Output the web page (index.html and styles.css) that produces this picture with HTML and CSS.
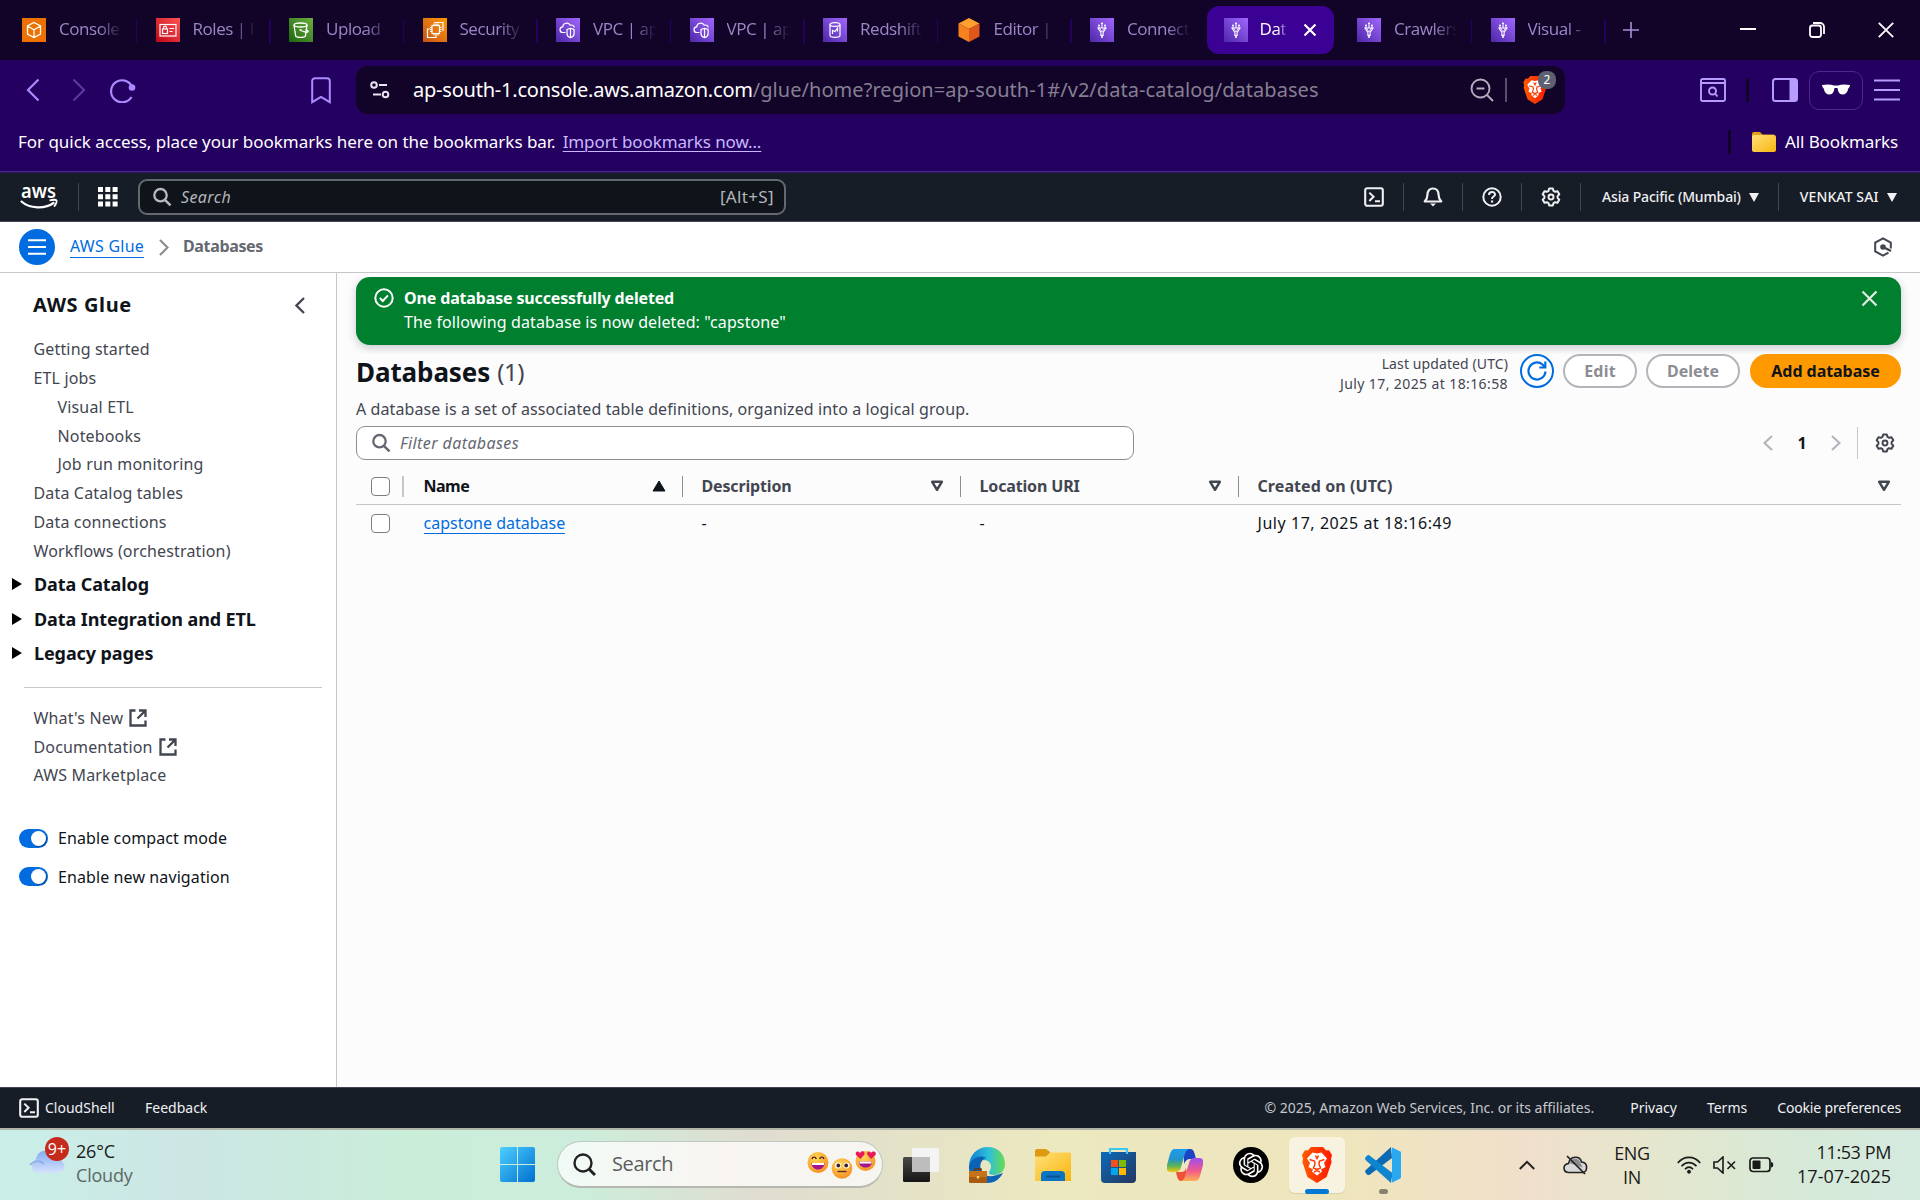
FILE: index.html
```html
<!DOCTYPE html>
<html lang="en">
<head>
<meta charset="utf-8">
<title>Databases - AWS Glue Console</title>
<link rel="stylesheet" href="styles.css">
</head>
<body>
<svg class="defs" width="0" height="0">
  <defs>
    <linearGradient id="gPurple" x1="0" y1="1" x2="1" y2="0"><stop offset="0" stop-color="#4d27a8"/><stop offset="1" stop-color="#a166ff"/></linearGradient>
    <linearGradient id="gRed" x1="0" y1="1" x2="1" y2="0"><stop offset="0" stop-color="#bd0816"/><stop offset="1" stop-color="#ff5252"/></linearGradient>
    <linearGradient id="gGreen" x1="0" y1="1" x2="1" y2="0"><stop offset="0" stop-color="#1b660f"/><stop offset="1" stop-color="#6cae3e"/></linearGradient>
    <linearGradient id="gOrange" x1="0" y1="1" x2="1" y2="0"><stop offset="0" stop-color="#c8511b"/><stop offset="1" stop-color="#ff9900"/></linearGradient>
    <linearGradient id="gWin" x1="0" y1="0" x2="1" y2="1"><stop offset="0" stop-color="#4cd0ff"/><stop offset="1" stop-color="#0070d0"/></linearGradient>
    <linearGradient id="gCloud" x1="0" y1="0" x2="0" y2="1"><stop offset="0" stop-color="#86aaf0"/><stop offset="1" stop-color="#d4e2fc"/></linearGradient>
    <linearGradient id="gEdge" x1="0" y1="0" x2="1" y2="0"><stop offset="0" stop-color="#0c80d4"/><stop offset=".55" stop-color="#2dc0d8"/><stop offset="1" stop-color="#68dc50"/></linearGradient>
    <linearGradient id="gFolder" x1="0" y1="0" x2="1" y2="1"><stop offset="0" stop-color="#ffe07a"/><stop offset="1" stop-color="#f9b50e"/></linearGradient>
    <linearGradient id="gStore" x1="0" y1="0" x2="1" y2="1"><stop offset="0" stop-color="#0a6cbc"/><stop offset="1" stop-color="#26365e"/></linearGradient>
    <linearGradient id="gCopA" x1="0" y1="0" x2="0" y2="1"><stop offset="0" stop-color="#1c9df0"/><stop offset=".45" stop-color="#2494c8"/><stop offset=".75" stop-color="#62b552"/><stop offset="1" stop-color="#f6c913"/></linearGradient>
    <linearGradient id="gCopB" x1="0" y1="0" x2="0" y2="1"><stop offset="0" stop-color="#9c4ff0"/><stop offset=".55" stop-color="#f0598a"/><stop offset="1" stop-color="#ffb052"/></linearGradient>
    <linearGradient id="gBrave" x1="0" y1="0" x2="1" y2="0"><stop offset="0" stop-color="#ff5a00"/><stop offset="1" stop-color="#ff1a00"/></linearGradient>
    <linearGradient id="gDark" x1="0" y1="0" x2="0" y2="1"><stop offset="0" stop-color="#4a4a4a"/><stop offset="1" stop-color="#151515"/></linearGradient>
    <radialGradient id="gFace" cx=".4" cy=".3" r=".8"><stop offset="0" stop-color="#ffd755"/><stop offset="1" stop-color="#f58a1f"/></radialGradient>
  </defs>
  <symbol id="glue" viewBox="0 0 24 24"><rect width="24" height="24" fill="url(#gPurple)"/><g fill="none" stroke="#fff" stroke-width="1.100"><path d="M8 10h8l-2.900 4.400v3h-2.200v-3zM9 8.600V10M12 6.500V10M15 8.600V10M12 17.400v1.200"/><path d="M9.500 10l2.500 4 2.500-4" stroke-width=".8"/></g><g fill="#fff"><circle cx="9" cy="7.600" r="1"/><circle cx="12" cy="5.500" r="1.100"/><circle cx="15" cy="7.600" r="1"/><circle cx="12" cy="19" r="1"/></g></symbol>
  <symbol id="vpc" viewBox="0 0 24 24"><rect width="24" height="24" fill="url(#gPurple)"/><g fill="none" stroke="#fff" stroke-width="1.200"><path d="M9.500 14.500H7a2.800 2.800 0 0 1-.300-5.600C6.800 5 12.500 3.600 14.300 7.300c2-.9 4 .4 4 2.300"/><path d="M14.500 10.300l3.600 1.200v4.200c0 2-2 3.400-3.600 4-1.600-.6-3.500-2-3.500-4v-4.200zM14.500 10.300v9.300"/></g></symbol>
  <symbol id="shell" viewBox="0 0 20 20"><rect x="1.200" y="1.200" width="17.600" height="17.600" rx="2" fill="none" stroke="currentColor" stroke-width="2.100"/><path d="M5.300 5.600l4.300 4.200-4.300 4.200M11 14.300h5" fill="none" stroke="currentColor" stroke-width="2"/></symbol>
  <symbol id="gear" viewBox="0 0 20 20"><path d="M8.200 1.500h3.600l.7 2.400 1.600.9 2.400-.6 1.800 3.100-1.700 1.800v1.800l1.700 1.800-1.800 3.100-2.400-.6-1.600.9-.7 2.400H8.200l-.7-2.400-1.600-.9-2.400.6-1.800-3.100 1.700-1.800V9.100L1.700 7.300l1.800-3.100 2.400.6 1.600-.9z" fill="none" stroke="currentColor" stroke-width="2" stroke-linejoin="round"/><circle cx="10" cy="10" r="2.500" fill="none" stroke="currentColor" stroke-width="1.900"/></symbol>
  <symbol id="mag" viewBox="0 0 20 20"><circle cx="8.500" cy="8.200" r="6.200" fill="none" stroke="currentColor" stroke-width="2.300"/><path d="M12.900 12.800l5.600 5.600" stroke="currentColor" stroke-width="2.500"/></symbol>
  <symbol id="ext" viewBox="0 0 18 18"><path d="M6.500 1.500H1.500v15h15v-5M10 1.500h6.500V8M16 2L8.500 9.500" fill="none" stroke="currentColor" stroke-width="2.300"/></symbol>
  <symbol id="tridown" viewBox="0 0 14 12"><path d="M2.200 1.800h9.600L7 9.800z" fill="none" stroke="currentColor" stroke-width="2.500" stroke-linejoin="round"/></symbol>
  <symbol id="lion" viewBox="0 0 30 36"><path d="M9 0h12l3.200 3.600 2.800-.4L30 8l-1 4 .6 3-5 15L15 36 5.400 30 .4 15 1 12 0 8l3-4.800 2.800.4z" fill="url(#gBrave)"/><path d="M10.500 5.500l4.500 1 4.500-1 5.500 6-3 4.500 1.500 4-4.500 2.500 1 2-5 4-5-4 1-2-4.500-2.500 1.500-4-3-4.500z" fill="#fff"/><path d="M7.500 12.500l5 1.500.5 3-1.500 4 3.500 1.500 3.500-1.500-1.500-4 .5-3 5-1.500M12 25l3-1.500 3 1.500M13.500 8.500l1.500 3 1.500-3" fill="none" stroke="#ff3a00" stroke-width="1.500"/></symbol>
</svg>

<header class="tabstrip">
  <div class="tab"><svg class="fav" viewBox="0 0 24 24"><rect width="24" height="24" fill="#ed7100"/><path d="M12 4.500l6.500 3.500v8L12 19.500 5.500 16V8zM5.500 8l6.500 3.700L18.500 8M12 11.700v7.800" fill="none" stroke="#fff" stroke-width="1.300"/></svg><span class="tt">Console</span></div>
  <div class="tab"><svg class="fav" viewBox="0 0 24 24"><rect width="24" height="24" fill="url(#gRed)"/><g fill="none" stroke="#fff" stroke-width="1.200"><rect x="4" y="6.500" width="16" height="11.500"/><rect x="6.500" y="11" width="5" height="4.500"/><path d="M7.500 11V9.700a1.500 1.500 0 0 1 3 0V11M13.500 10.500h4.500M13.500 13.500h3"/></g></svg><span class="tt">Roles | I</span></div>
  <div class="tab"><svg class="fav" viewBox="0 0 24 24"><rect width="24" height="24" fill="url(#gGreen)"/><g fill="none" stroke="#fff" stroke-width="1.300"><ellipse cx="11.500" cy="7" rx="6.500" ry="2"/><path d="M5 7l1.700 11c.5 1.800 9.200 1.800 9.700 0L18 7M12 12.500c3 1.500 7 2.500 7.200 1 .1-.8-1.500-1.600-2.600-2.200"/></g><circle cx="11.500" cy="12" r="1.100" fill="#fff"/></svg><span class="tt">Upload</span></div>
  <div class="tab"><svg class="fav" viewBox="0 0 24 24"><rect width="24" height="24" fill="url(#gOrange)"/><g fill="none" stroke="#fff" stroke-width="1.200"><rect x="9" y="7.500" width="7.500" height="8"/><path d="M11 5.500v2M13 5.500v2M15 5.500v2M11 15.500v2M13 15.500v2M15 15.500v2M7 9.500h2M7 11.500h2M7 13.500h2M16.500 9.500h2M16.500 11.500h2M16.500 13.500h2M11 4.500h9V13M7 11H4.500v8.500h8.500v-2"/></g></svg><span class="tt">Security</span></div>
  <div class="tab"><svg class="fav"><use href="#vpc"/></svg><span class="tt">VPC | ap</span></div>
  <div class="tab"><svg class="fav"><use href="#vpc"/></svg><span class="tt">VPC | ap</span></div>
  <div class="tab"><svg class="fav" viewBox="0 0 24 24"><rect width="24" height="24" fill="url(#gPurple)"/><g fill="none" stroke="#fff" stroke-width="1.200"><ellipse cx="12" cy="6.500" rx="5" ry="1.900"/><path d="M7 6.500v11c0 2.400 10 2.400 10 0v-11M9.500 16v-3.500l2.500 1 2.500-3.500v3.500"/></g></svg><span class="tt">Redshift</span></div>
  <div class="tab"><svg class="fav" viewBox="0 0 24 24"><path d="M12 0l10.500 5.500L12 11 1.500 5.500z" fill="#ffa02e"/><path d="M1.500 5.500L12 11v13L1.500 18.500z" fill="#f6821f"/><path d="M22.500 5.500L12 11v13l10.500-5.500z" fill="#e0571d"/></svg><span class="tt">Editor |</span></div>
  <div class="tab nosep"><svg class="fav"><use href="#glue"/></svg><span class="tt">Connect</span></div>
  <div class="tab active"><svg class="fav"><use href="#glue"/></svg><span class="tt">Dat</span><svg class="tabx" viewBox="0 0 14 14"><path d="M1.500 1.500l11 11M12.500 1.500l-11 11" stroke="#fff" stroke-width="2.200"/></svg></div>
  <div class="tab"><svg class="fav"><use href="#glue"/></svg><span class="tt">Crawlers</span></div>
  <div class="tab"><svg class="fav"><use href="#glue"/></svg><span class="tt">Visual -</span></div>
  <svg class="plus" viewBox="0 0 18 18"><path d="M9 1v16M1 9h16" stroke="#a98fd8" stroke-width="1.600"/></svg>
  <div class="winctl">
    <svg width="16" height="16" viewBox="0 0 16 16"><path d="M0 7h16" stroke="#fff" stroke-width="2"/></svg>
    <svg width="16" height="16" viewBox="0 0 16 16" fill="none" stroke="#fff" stroke-width="1.800"><rect x="1" y="3.500" width="11" height="11.500" rx="2.500"/><path d="M4 1h7a4 4 0 0 1 4 4v7"/></svg>
    <svg width="16" height="16" viewBox="0 0 16 16"><path d="M.8.800l14.400 14.400M15.200.8L.8 15.200" stroke="#fff" stroke-width="1.800"/></svg>
  </div>
</header>

<section class="toolbar">
  <div class="navbtns">
    <svg width="14" height="24" viewBox="0 0 14 24"><path d="M12.500 1.500L2 12l10.500 10.500" fill="none" stroke="#a98bff" stroke-width="2.200"/></svg>
    <svg width="14" height="24" viewBox="0 0 14 24"><path d="M1.500 1.500L12 12 1.500 22.500" fill="none" stroke="#5a37a0" stroke-width="2.200"/></svg>
    <svg width="26" height="26" viewBox="0 0 26 26"><path d="M22 9.500A11 11 0 1 0 21.500 20" fill="none" stroke="#a98bff" stroke-width="2.200"/><circle cx="22" cy="10.500" r="3.300" fill="#a98bff"/></svg>
  </div>
  <svg class="bm" width="20" height="27" viewBox="0 0 20 27"><path d="M1.200 4a2.800 2.800 0 0 1 2.800-2.800h12A2.800 2.800 0 0 1 18.800 4v21.200L10 19.800 1.200 25.200z" fill="none" stroke="#a98bff" stroke-width="2"/></svg>
  <div class="urlbar">
    <svg width="20" height="18" viewBox="0 0 20 18" fill="none" stroke="#e8e4f0" stroke-width="2"><circle cx="4" cy="4" r="2.800"/><path d="M9 4h8M3 13.500h8"/><circle cx="15.500" cy="13.500" r="2.800"/></svg>
    <div class="url"><span class="host">ap-south-1.console.aws.amazon.com</span><span class="path">/glue/home?region=ap-south-1#/v2/data-catalog/databases</span></div>
    <svg class="zoomi" width="24" height="24" viewBox="0 0 24 24" fill="none" stroke="#b3aebf" stroke-width="1.900"><circle cx="10.500" cy="10.500" r="9"/><path d="M17 17l6 6M6.500 10.500h8"/></svg>
    <i class="usep"></i>
    <div class="shield"><svg width="24" height="28"><use href="#lion"/></svg><b class="badge">2</b></div>
  </div>
  <div class="rtools">
    <svg width="26" height="24" viewBox="0 0 26 24" fill="none" stroke="#b79cff" stroke-width="1.900"><rect x="1" y="1" width="24" height="22" rx="1.500"/><path d="M1 5h24" stroke-width="2"/><circle cx="12.500" cy="13" r="3.500"/><path d="M15 15.500l2.500 3"/></svg>
    <i class="rsep"></i>
    <svg width="26" height="24" viewBox="0 0 26 24"><rect x="1" y="1" width="24" height="22" rx="2.500" fill="none" stroke="#b79cff" stroke-width="2"/><path d="M17.500 1h7.500v22h-7.500z" fill="#b79cff"/></svg>
    <div class="vpn"><svg width="28" height="12" viewBox="0 0 28 12"><path d="M0 1c5-1 9-.7 12 .5h4c3-1.200 7-1.500 12-.5l-.5 2-1.200 1.500c-.8 4-2.800 6-5.800 6-3.500 0-4.500-3-5-6.500h-3c-.5 3.500-1.500 6.500-5 6.500-3 0-5-2-5.800-6L.5 3z" fill="#fff"/></svg></div>
    <svg width="26" height="22" viewBox="0 0 26 22"><path d="M0 1.500h26M0 11h26M0 20.500h26" stroke="#b79cff" stroke-width="2"/></svg>
  </div>
</section>
<section class="bookmarks">
  <span class="bmtext">For quick access, place your bookmarks here on the bookmarks bar.</span>
  <span class="bmlink">Import bookmarks now...</span>
  <i class="bmsep"></i>
  <svg width="24" height="20" viewBox="0 0 24 20"><path d="M0 2a2 2 0 0 1 2-2h6l2.500 2.500H22v4H0z" fill="#e0a21b"/><rect y="3" width="24" height="17" rx="2" fill="url(#gFolder)"/></svg>
  <span class="allbm">All Bookmarks</span>
</section>

<nav class="awsnav">
  <svg class="awslogo" width="38" height="24" viewBox="0 0 38 24"><text x="1" y="12.500" class="awst" textLength="35" lengthAdjust="spacingAndGlyphs">aws</text><path d="M.8 16c9 8 24 8.500 33.500 1.500" fill="none" stroke="#fff" stroke-width="2.200"/><path d="M29.500 15.500c3-1 6.500-1 7 0s-.5 4-2.500 6" fill="none" stroke="#fff" stroke-width="1.800"/></svg>
  <i class="nsep"></i>
  <svg class="grid9" width="20" height="20" viewBox="0 0 20 20" fill="#fff"><path d="M0 0h5v5H0zM7.300 0h5v5h-5zM14.600 0h5v5h-5zM0 7.300h5v5H0zM7.300 7.300h5v5h-5zM14.600 7.300h5v5h-5zM0 14.600h5v5H0zM7.300 14.600h5v5h-5zM14.600 14.600h5v5h-5z"/></svg>
  <div class="nsearch"><svg width="20" height="20"><use href="#mag"/></svg><em>Search</em><span class="alt">[Alt+S]</span></div>
  <div class="nright">
    <svg width="20" height="20"><use href="#shell"/></svg><i class="nsep"></i>
    <svg width="20" height="20" viewBox="0 0 20 20"><path d="M10 1.500c-3.600 0-5.500 2.700-5.500 6 0 3.500-1 5-2.800 7h16.600c-1.800-2-2.800-3.500-2.800-7 0-3.300-1.900-6-5.500-6z" fill="none" stroke="currentColor" stroke-width="2.200" stroke-linejoin="round"/><path d="M7 16.500h6l-3 3z" fill="currentColor"/></svg><i class="nsep"></i>
    <svg width="20" height="20" viewBox="0 0 20 20"><circle cx="10" cy="10" r="8.700" fill="none" stroke="currentColor" stroke-width="2"/><path d="M7 8c0-4 6-4 6-.6 0 2.300-3 2-3 4.600" fill="none" stroke="currentColor" stroke-width="2"/><path d="M9 13.500h2.200v2H9z" fill="currentColor"/></svg><i class="nsep"></i>
    <svg width="20" height="20"><use href="#gear"/></svg><i class="nsep"></i>
    <span class="region">Asia Pacific (Mumbai)</span><svg width="10" height="9" viewBox="0 0 10 9"><path d="M0 0h10L5 9z" fill="currentColor"/></svg><i class="nsep"></i>
    <span class="user">VENKAT SAI</span><svg width="10" height="9" viewBox="0 0 10 9"><path d="M0 0h10L5 9z" fill="currentColor"/></svg>
  </div>
</nav>

<div class="crumbs">
  <div class="burger"><svg width="18" height="16" viewBox="0 0 18 16"><path d="M0 1.200h18M0 8h18M0 14.800h18" stroke="#fff" stroke-width="2"/></svg></div>
  <a class="crumb">AWS Glue</a>
  <svg width="10" height="17" viewBox="0 0 10 17"><path d="M1 1l7.500 7.500L1 16" fill="none" stroke="#8c8c94" stroke-width="2.200"/></svg>
  <b class="here">Databases</b>
  <svg class="hexi" width="18" height="20" viewBox="0 0 18 20"><path d="M16.800 11.500V5.700L9 1.300 1.200 5.700v8.600L9 18.700l5.500-3.100" fill="none" stroke="#424650" stroke-width="2"/><circle cx="9" cy="10" r="2.800" fill="#424650"/><path d="M9 10l8 4" stroke="#424650" stroke-width="2.400"/></svg>
</div>

<main class="body">
  <aside class="side">
    <div class="sidehead"><h2>AWS Glue</h2><svg width="10" height="17" viewBox="0 0 10 17"><path d="M9 1L1.500 8.500 9 16" fill="none" stroke="#424650" stroke-width="2.300"/></svg></div>
    <ul class="links">
      <li><span>Getting started</span></li><li><span>ETL jobs</span></li>
      <li class="sub"><span>Visual ETL</span></li><li class="sub"><span>Notebooks</span></li><li class="sub"><span>Job run monitoring</span></li>
      <li><span>Data Catalog tables</span></li><li><span>Data connections</span></li><li><span>Workflows (orchestration)</span></li>
    </ul>
    <ul class="groups">
      <li><svg width="10" height="12" viewBox="0 0 10 12"><path d="M0 0l10 6-10 6z"/></svg><b>Data Catalog</b></li>
      <li><svg width="10" height="12" viewBox="0 0 10 12"><path d="M0 0l10 6-10 6z"/></svg><b>Data Integration and ETL</b></li>
      <li><svg width="10" height="12" viewBox="0 0 10 12"><path d="M0 0l10 6-10 6z"/></svg><b>Legacy pages</b></li>
    </ul>
    <ul class="links extra">
      <li><span>What's New</span><svg width="18" height="18"><use href="#ext"/></svg></li>
      <li><span>Documentation</span><svg width="18" height="18"><use href="#ext"/></svg></li>
      <li><span>AWS Marketplace</span></li>
    </ul>
    <div class="toggles">
      <div><i class="switch"></i><span>Enable compact mode</span></div>
      <div><i class="switch"></i><span>Enable new navigation</span></div>
    </div>
  </aside>

  <section class="content">
    <div class="flashwrap"><div class="flash">
      <svg width="20" height="20" viewBox="0 0 20 20" fill="none" stroke="#fff" stroke-width="2"><circle cx="10" cy="10" r="8.700"/><path d="M5.800 10l3 3L14 7.300"/></svg>
      <div class="ftext"><b>One database successfully deleted</b><span>The following database is now deleted: "capstone"</span></div>
      <svg width="17" height="17" viewBox="0 0 17 17"><path d="M1.500 1.500l14 14M15.500 1.500l-14 14" stroke="#e4eee6" stroke-width="2.200"/></svg>
    </div></div>
    <div class="headrow">
      <h1>Databases</h1><span class="count">(1)</span>
      <div class="updated"><span>Last updated (UTC)</span><span class="stamp">July 17, 2025 at 18:16:58</span></div>
      <div class="btn round"><svg width="20" height="20" viewBox="0 0 20 20" fill="none" stroke="#006ce0" stroke-width="2.200"><path d="M18.500 10.500A8.500 8.500 0 1 1 15.500 3.500l2.500 2.700"/><path d="M18.300.500v6h-6"/></svg></div>
      <div class="btn edit"><b>Edit</b></div><div class="btn del"><b>Delete</b></div><div class="btn primary"><b>Add database</b></div>
    </div>
    <p class="desc">A database is a set of associated table definitions, organized into a logical group.</p>
    <div class="filterrow">
      <div class="filter"><svg width="20" height="20"><use href="#mag"/></svg><em>Filter databases</em></div>
      <div class="pager">
        <svg width="10" height="16" viewBox="0 0 10 16"><path d="M9 1L1.500 8 9 15" fill="none" stroke="#b4b4bb" stroke-width="2.200"/></svg>
        <b>1</b>
        <svg width="10" height="16" viewBox="0 0 10 16"><path d="M1 1l7.500 7L1 15" fill="none" stroke="#b4b4bb" stroke-width="2.200"/></svg>
        <i></i>
        <svg class="pg" width="20" height="20"><use href="#gear"/></svg>
      </div>
    </div>
    <div class="grid head">
      <div class="c0"><i class="cb"></i></div>
      <div class="cell on"><b>Name</b><svg width="14" height="12" viewBox="0 0 14 12"><path d="M7 1l6 10H1z" fill="currentColor" stroke="currentColor"/></svg></div>
      <div class="cell"><b>Description</b><svg width="14" height="12"><use href="#tridown"/></svg></div>
      <div class="cell"><b>Location URI</b><svg width="14" height="12"><use href="#tridown"/></svg></div>
      <div class="cell wide"><b>Created on (UTC)</b><svg width="14" height="12"><use href="#tridown"/></svg></div>
    </div>
    <div class="grid row">
      <div class="c0"><i class="cb"></i></div>
      <div class="cell"><a>capstone database</a></div>
      <div class="cell"><span>-</span></div>
      <div class="cell"><span>-</span></div>
      <div class="cell"><span class="date">July 17, 2025 at 18:16:49</span></div>
    </div>
  </section>
</main>

<footer class="foot">
  <svg width="20" height="20"><use href="#shell"/></svg>
  <span class="f1">CloudShell</span><span class="f2">Feedback</span>
  <span class="copy">© 2025, Amazon Web Services, Inc. or its affiliates.</span>
  <span class="f3">Privacy</span><span class="f4">Terms</span><span class="f5">Cookie preferences</span>
</footer>

<div class="taskbar">
  <div class="weather">
    <div class="wicon"><svg width="38" height="24" viewBox="0 0 38 24"><path d="M8 23a7.500 7.500 0 0 1-.5-13C9 3 14 0 19 1c5 .500 8 4 9 8.500 11 0 11 13 1 13.500z" fill="url(#gCloud)"/><path d="M2 15c4-5 10-5 14-1" fill="none" stroke="#88a8ea" stroke-width="1.500"/></svg><b>9+</b></div>
    <div class="wtext"><span>26°C</span><span class="dim">Cloudy</span></div>
  </div>
  <svg class="win" width="35" height="35" viewBox="0 0 35 35" fill="url(#gWin)"><path d="M2 0h15v17H0V2a2 2 0 0 1 2-2zM18 0h15a2 2 0 0 1 2 2v15H18zM0 18h17v17H2a2 2 0 0 1-2-2zM18 18h17v15a2 2 0 0 1-2 2H18z"/></svg>
  <div class="tsearch"><svg width="23" height="23" viewBox="0 0 23 23"><circle cx="10" cy="10" r="8.500" fill="none" stroke="#222" stroke-width="2.400"/><path d="M16 16l6 6" stroke="#222" stroke-width="3"/></svg><span>Search</span>
    <svg class="emo" width="70" height="30" viewBox="0 0 70 30">
      <g><circle cx="11" cy="13.500" r="10.500" fill="url(#gFace)"/><path d="M4.500 14h13c0 4-3 6.500-6.500 6.500S4.500 18 4.500 14z" fill="#a3158f"/><path d="M5 14h12v2H5z" fill="#fff"/><path d="M5 10c.8-2.500 3.500-2.500 4.300 0M12.700 10c.8-2.500 3.500-2.500 4.300 0" fill="none" stroke="#4e1f2a" stroke-width="1.400"/></g>
      <g><circle cx="35" cy="19.500" r="10.300" fill="url(#gFace)"/><circle cx="31" cy="16.500" r="3" fill="#fff"/><circle cx="39.500" cy="16.500" r="3" fill="#fff"/><circle cx="31.300" cy="16.500" r="1.900" fill="#3d2227"/><circle cx="39.200" cy="16.500" r="1.900" fill="#3d2227"/><path d="M30.500 22.500h9" stroke="#5b2b33" stroke-width="1.400"/></g>
      <g><circle cx="58.500" cy="12" r="10" fill="url(#gFace)"/><path d="M52 12.500h13c0 4-3 6-6.500 6s-6.500-2-6.500-6z" fill="#a3158f"/><path d="M52.500 12.500h12v2h-12z" fill="#fff"/><path d="M53.500 10l-4.500-4c-1.500-3.500 2.500-5 4-2 2-3.500 6-1 4 2zM64 10l-3.500-4c-1.500-3.500 2-5 3.500-2 2-3 6-1 4.500 2z" fill="#e8195a"/></g>
    </svg>
  </div>
  <svg class="tv" width="36" height="34" viewBox="0 0 36 34"><rect y="9" width="27" height="25" rx="1.500" fill="url(#gDark)"/><rect x="9" width="27" height="24" rx="1.500" fill="#f4f4f4"/><path d="M9 9h18v15H9z" fill="#bdbdbd"/></svg>
  <svg class="app" viewBox="0 0 36 36"><path d="M0 20C0 8 8 0 19 0s17 8 17 17c0 7-5 11-11 11-3 0-5-1-5-2 0-2 2-3 2-7 0-3-3-6-7-6C8 13 2 18 0 24z" fill="url(#gEdge)"/><path d="M0 20c2-9 11-13 17-9-4 1-7 6-5 12 2 7 10 8 22 3-4 7-9 10-16 10C7 36 0 29 0 20z" fill="#0c62b4"/><rect y="24" width="18" height="12" rx="1.200" fill="#a85a12"/><path d="M0 24h18v6H0z" fill="#c5731a"/><path d="M6 24v-2h6v2" fill="none" stroke="#6b370a" stroke-width="1.500"/><rect x="7.800" y="29" width="2.400" height="2.400" fill="#ffd66a"/></svg>
  <svg class="app" viewBox="0 0 36 36"><path d="M0 4a2 2 0 0 1 2-2h9l4 3v5H0z" fill="#dc9a12"/><path d="M0 9.500h11l4-4h20a1 1 0 0 1 1 1V34H0z" fill="url(#gFolder)"/><path d="M6 34V28a4 4 0 0 1 4-4h16a4 4 0 0 1 4 4v6z" fill="#0d74c4"/><path d="M11 29.500h14" stroke="#0a4f90" stroke-width="1.800"/></svg>
  <svg class="app" viewBox="0 0 36 36"><path d="M0 5h35v27a4 4 0 0 1-4 4H4a4 4 0 0 1-4-4z" fill="url(#gStore)"/><path d="M9 7V2h17v5" fill="none" stroke="#3cc8ee" stroke-width="2.200"/><path d="M10 13h7v7h-7z" fill="#f25022"/><path d="M18 13h7v7h-7z" fill="#7fba00"/><path d="M10 21h7v7h-7z" fill="#00a4ef"/><path d="M18 21h7v7h-7z" fill="#ffb900"/></svg>
  <svg class="app" viewBox="0 0 36 36"><path d="M17 2h6c3 0 4 2 5 6l1 4h-6c-3 0-5 2-6 5z" fill="#1a44c4"/><path d="M8 2h14c-3 1-4 4-5 8l-3 10c-1 4-3 5-6 5H4c-4 0-5-3-4-7L3 7c1-3 2-5 5-5z" fill="url(#gCopA)"/><path d="M9 25h5c3 0 4-1 5-4l1 8-3 5h-3c-3 0-4-4-5-9z" fill="#ee5236"/><path d="M28 34H14c3-1 4-4 5-8l3-10c1-4 3-5 6-5h4c4 0 5 3 4 7l-3 11c-1 3-2 5-5 5z" fill="url(#gCopB)"/></svg>
  <svg class="app" viewBox="0 0 36 36"><circle cx="18" cy="18" r="18" fill="#000"/><path transform="translate(5.800 5.800) scale(1.017)" fill="#fff" d="M22.282 9.821a5.985 5.985 0 0 0-.516-4.911 6.046 6.046 0 0 0-6.51-2.900A6.065 6.065 0 0 0 4.981 4.182a5.985 5.985 0 0 0-3.998 2.900 6.046 6.046 0 0 0 .743 7.097 5.980 5.980 0 0 0 .511 4.911 6.051 6.051 0 0 0 6.515 2.900A5.985 5.985 0 0 0 13.260 24a6.056 6.056 0 0 0 5.772-4.206 5.989 5.989 0 0 0 3.998-2.900 6.056 6.056 0 0 0-.748-7.073zM13.260 22.430a4.476 4.476 0 0 1-2.876-1.041l.142-.080 4.778-2.758a.795.795 0 0 0 .393-.681v-6.737l2.020 1.169a.071.071 0 0 1 .038.061v5.583a4.504 4.504 0 0 1-4.495 4.484zM3.599 18.304a4.471 4.471 0 0 1-.535-3.014l.142.085 4.783 2.758a.771.771 0 0 0 .781 0l5.843-3.368v2.332a.080.080 0 0 1-.033.062L9.740 19.950a4.499 4.499 0 0 1-6.141-1.646zM2.341 7.896a4.485 4.485 0 0 1 2.366-1.973V11.600a.766.766 0 0 0 .388.677l5.814 3.354-2.020 1.168a.076.076 0 0 1-.071 0l-4.830-2.786A4.504 4.504 0 0 1 2.341 7.872zM18.937 11.751L13.104 8.364 15.119 7.200a.076.076 0 0 1 .071 0l4.830 2.791a4.494 4.494 0 0 1-.677 8.104v-5.677a.790.790 0 0 0-.406-.667zM20.948 8.728l-.142-.085-4.774-2.782a.776.776 0 0 0-.785 0L9.409 9.230V6.897a.066.066 0 0 1 .028-.061l4.830-2.787a4.499 4.499 0 0 1 6.681 4.660zM8.307 12.863l-2.020-1.164a.080.080 0 0 1-.038-.057V6.074a4.499 4.499 0 0 1 7.376-3.454l-.142.081L8.704 5.459a.795.795 0 0 0-.393.681zM9.404 10.498l2.602-1.500 2.607 1.500v2.999l-2.597 1.500-2.607-1.500z"/></svg>
  <div class="runbox"><svg width="30" height="36"><use href="#lion"/></svg><i></i></div>
  <div class="code"><svg width="36" height="36" viewBox="0 0 36 36"><path d="M26 0l1 11L5 27.500c-1 .7-2 .7-3 0L.8 26c-1-1-.8-2.300 0-3z" fill="#0a6ab4"/><path d="M.8 10c-1 1-1 2.500 0 3.300L26 36l1.500-10L4.500 8.500C3.500 7.800 2.500 8 2 8.700z" fill="#0d86cf"/><path d="M26 0l8.500 4c1 .5 1.500 1 1.500 2.200v23.600c0 1.200-.5 1.700-1.500 2.200L26 36c1 0 1-1 1-2V2c0-1 0-2-1-2z" fill="#2aa9f2"/></svg><i></i></div>
  <div class="tray">
    <svg width="16" height="10" viewBox="0 0 16 10"><path d="M.8 9L8 1.800 15.200 9" fill="none" stroke="#222" stroke-width="2"/></svg>
    <svg class="cl" width="25" height="20" viewBox="0 0 25 20"><path d="M6 17.500c-6 0-7-8-.5-9C7 .500 17 .500 18.500 7c7 .500 6.500 10.500.500 10.500z" fill="#d8d8d8" stroke="#222" stroke-width="1.600"/><path d="M6.500 8c2-5 9-6 11 0l2 4.500z" fill="#8a8a8a"/><path d="M4 1l18 18" stroke="#222" stroke-width="1.700"/></svg>
    <div class="lang"><span>ENG</span><span>IN</span></div>
    <svg class="wf" width="24" height="18" viewBox="0 0 24 18" fill="none" stroke="#1a1a1a" stroke-width="1.700"><path d="M.8 7C7-.5 17-.500 23.200 7M4.500 10.300c4.300-5 10.700-5 15 0M8 13.300c2.500-2.800 5.500-2.800 8 0"/><circle cx="12" cy="15.700" r="1.500" fill="#1a1a1a" stroke-width="1"/></svg>
    <svg class="vo" width="24" height="18" viewBox="0 0 24 18" fill="none" stroke="#1a1a1a" stroke-width="1.600"><path d="M1 6h3.500L10 1v16l-5.500-5H1zM14.500 5.500l7.500 7.500M22 5.500L14.500 13"/></svg>
    <svg class="ba" width="25" height="16" viewBox="0 0 25 16"><rect x="1" y="1" width="20" height="13.500" rx="3" fill="none" stroke="#1a1a1a" stroke-width="1.700"/><rect x="3.500" y="3.500" width="8" height="8.500" rx="1" fill="#1a1a1a"/><path d="M22 5c3 0 3 5.500 0 5.500z" fill="#1a1a1a"/></svg>
    <div class="clock"><span class="time">11:53 PM</span><span>17-07-2025</span></div>
  </div>
</div>
</body>
</html>
```
FILE: styles.css
```css
* { box-sizing: border-box; }
html, body { margin: 0; padding: 0; }
body {
  width: 1920px; height: 1200px; overflow: hidden;
  display: flex; flex-direction: column;
  font-family: "Noto Sans", "Open Sans", sans-serif;
  font-size: 16px; line-height: 20px; color: #0f141a; background: #fff;
}
svg { display: block; flex: none; }
.defs { position: absolute; }
span, b, em, a, h1, h2, p { white-space: nowrap; }
ul { list-style: none; margin: 0; padding: 0; }
h1, h2, p { margin: 0; }

/* tab strip */
.tabstrip { flex: none; height: 60px; background: #120428; display: flex; align-items: center; padding-left: 5px; font-family: "Open Sans", "Noto Sans", sans-serif; }
.tab { position: relative; flex: none; width: 127px; height: 48px; margin-right: 6.5px; padding-left: 17px; display: flex; align-items: center; }
.tab::after { content: ""; position: absolute; left: 130.500px; top: 13px; width: 1.500px; height: 24px; background: #240060; }
.tab.nosep::after, .tab.active::after { display: none; }
.fav { width: 24px; height: 24px; }
.tt { margin: -2px 0 0 13px; width: 66px; font-size: 17px; letter-spacing: -.45px; line-height: 26px; color: #9b86c8; -webkit-mask-image: linear-gradient(90deg, #000 60%, transparent 96%); mask-image: linear-gradient(90deg, #000 60%, transparent 96%); }
.tab.active { background: #3b0094; border-radius: 12px; }
.active .tt { margin-left: 12px; width: 29px; color: #fff; }
.tabx { width: 14px; height: 14px; margin-left: 14px; }
.plus { width: 18px; height: 18px; margin-left: 15px; }
.winctl { margin-left: auto; margin-right: 26px; display: flex; gap: 53px; }

/* toolbar */
.toolbar { flex: none; height: 60px; background: #240060; display: flex; align-items: center; padding-left: 26px; }
.navbtns { display: flex; align-items: center; width: 285px; gap: 32px; }
.navbtns svg:last-child { margin-left: -8px; }
.urlbar { margin-left: 25px; width: 1209px; height: 48px; border-radius: 12px; background: #120428; display: flex; align-items: center; padding-left: 14px; }
.url { margin-left: 23px; width: 1057px; font-size: 20px; line-height: 28px; color: #857f93; display: flex; }
.host { color: #fff; letter-spacing: -.22px; }
.path { letter-spacing: .05px; }
.usep { width: 2px; height: 24px; margin: 0 16px 0 11px; background: #57506a; }
.shield { position: relative; }
.badge { position: absolute; left: 15px; top: -5px; width: 18px; height: 18px; border-radius: 8px; background: #5d6070; color: #fff; font: 12px/18px "Noto Sans", sans-serif; text-align: center; }
.rtools { margin-left: 135px; display: flex; align-items: center; }
.rsep { width: 3px; height: 24px; margin: 0 23px 0 20px; background: #120428; }
.vpn { width: 54px; height: 39px; margin: 0 11px; border: 1px solid #4a2a90; border-radius: 10px; display: flex; align-items: center; justify-content: center; }
.bookmarks { flex: none; height: 52px; background: #240060; border-bottom: 1px solid #4a2390; padding: 0 22px 7px 18px; display: flex; align-items: center; font-size: 17px; line-height: 24px; color: #fff; }
.bmtext { letter-spacing: -.03px; }
.bmlink { margin-left: 7px; letter-spacing: -.1px; color: #c9b8ff; text-decoration: underline; text-underline-offset: 3px; text-decoration-thickness: 1px; }
.bmsep { margin-left: auto; width: 3px; height: 24px; margin-right: 21px; background: #120428; }
.allbm { margin-left: 9px; width: 113px; letter-spacing: -.1px; }

/* AWS navigation */
.awsnav { flex: none; height: 50px; background: #161d26; border-top: 1px solid #2a1a58; border-bottom: 1px solid #424650; display: flex; align-items: center; padding-left: 20px; color: #f0f0f3; }
.awst { font: 600 19px "Noto Sans", sans-serif; fill: #fff; }
.nsep { flex: none; width: 1px; height: 28px; background: #424650; }
.awslogo + .nsep { margin: 0 19px 0 20px; }
.nsearch { margin-left: 20px; width: 648px; height: 36px; border: 2px solid #656871; border-radius: 9px; background: #0f141a; display: flex; align-items: center; padding: 0 10px 0 12px; color: #b4b4bb; }
.nsearch svg { color: #b9b9c0; }
.nsearch em { margin-left: 9px; letter-spacing: .4px; }
.alt { margin-left: auto; font-size: 17px; letter-spacing: .35px; }
.nright { margin-left: 578px; display: flex; align-items: center; font-size: 14px; }
.nright > svg { margin-right: 19px; }
.nright .nsep { margin-right: 19px; }
.nright .region, .nright .user { font-weight: 500; margin-right: 8px; }
.region { letter-spacing: -.15px; }
.nright .region { margin-left: 2px; }
.region + svg { margin-left: 0; }
.nright .user { margin-left: 2px; letter-spacing: .1px; }

/* breadcrumbs */
.crumbs { flex: none; height: 51px; border-bottom: 1px solid #c6c6cd; background: #fff; display: flex; align-items: center; padding-left: 19px; }
.burger { width: 36px; height: 36px; border-radius: 50%; background: #006ce0; display: flex; align-items: center; justify-content: center; margin-right: 15px; }
.crumb { width: 74px; height: 21px; letter-spacing: .25px; line-height: 19px; border-bottom: 1px solid #006ce0; color: #006ce0; margin-right: 15px; }
.here { margin: -2px 0 0 14px; color: #656871; letter-spacing: -.35px; }
.hexi { margin-left: auto; margin-right: 28px; }

/* body */
.body { flex: 1; display: flex; min-height: 0; }
.side { flex: none; width: 337px; border-right: 1px solid #c6c6cd; background: #fff; color: #424650; }
.sidehead { display: flex; align-items: center; justify-content: space-between; padding: 18px 31px 0 33px; height: 46px; color: #0f141a; }
.sidehead h2 { font-size: 20px; line-height: 28px; letter-spacing: .6px; }
.links { padding: 16px 0 0 33.500px; letter-spacing: .16px; }
.links li { height: 28.750px; display: flex; align-items: center; }
.links .sub { padding-left: 24px; }
.links svg { margin-left: 6px; }
.groups { margin: 2px 14px 0 24px; height: 121px; border-bottom: 1px solid #c6c6cd; color: #0f141a; font-size: 18px; letter-spacing: -.1px; }
.groups li { height: 34.600px; display: flex; align-items: center; margin-left: -12px; }
.groups b { margin-left: 12px; }
.extra { padding-top: 15.500px; }
.toggles { padding: 29px 0 0 19px; color: #0f141a; letter-spacing: .1px; }
.toggles div { height: 38.500px; display: flex; align-items: center; gap: 10px; }
.switch { width: 29px; height: 19px; border-radius: 10px; background: #006ce0; display: flex; justify-content: flex-end; padding: 2px; }
.switch::after { content: ""; width: 15px; height: 15px; border-radius: 50%; background: #fff; box-shadow: 1px 1px 1px #0049a0; }

/* content */
.content { flex: 1; background: #fcfcfd; padding: 4px 19px 0; }
.flashwrap { height: 77px; margin: 0 -19px; padding: 0 19px; overflow: hidden; }
.flash { height: 68px; border-radius: 14px; background: #00802f; box-shadow: 0 3px 10px rgba(0, 7, 22, .2); color: #fff; display: flex; padding: 11px 22px 0 18px; }
.ftext { flex: 1; display: flex; flex-direction: column; margin-left: 10px; gap: 4px; letter-spacing: .12px; }
.ftext b { letter-spacing: -.15px; }
.flash > svg:last-child { margin-top: 2px; margin-right: 1px; }
.headrow { display: flex; height: 40px; }
.headrow h1 { font-size: 26px; line-height: 36px; letter-spacing: -.1px; }
.count { margin-left: 7px; font-size: 24px; line-height: 36px; letter-spacing: -.4px; color: #424650; }
.updated { margin-left: auto; margin-right: 12px; display: flex; flex-direction: column; align-items: flex-end; font-size: 14px; letter-spacing: .1px; color: #424650; }
.stamp { letter-spacing: .4px; }
.btn { height: 34px; border: 2px solid #b4b4bb; border-radius: 17px; background: #fff; color: #8c8c94; display: flex; align-items: center; justify-content: center; }
.round { width: 34px; border-color: #006ce0; }
.edit { width: 74px; margin-left: 9px; letter-spacing: .2px; }
.del { width: 94px; margin-left: 9px; }
.primary { width: 151px; margin-left: 10px; border-color: #f90; background: #f90; color: #0f141a; letter-spacing: -.05px; }
.desc { margin-top: 5px; color: #424650; letter-spacing: .1px; }
.filterrow { display: flex; align-items: center; justify-content: space-between; margin-top: 7px; height: 34px; }
.filter { width: 778px; height: 34px; border: 1px solid #8c8c94; border-radius: 9px; background: #fff; display: flex; align-items: center; padding-left: 14px; color: #656871; }
.filter em { margin-left: 9px; letter-spacing: .4px; }
.pager { display: flex; align-items: center; padding-right: 6px; color: #424650; }
.pager b { width: 10px; margin: 0 24px; text-align: center; color: #0f141a; }
.pager i { width: 1px; height: 32px; margin: 0 17px 0 16px; background: #c6c6cd; }
.grid { display: grid; grid-template-columns: 47.500px 278px 278px 278px 1fr; align-items: center; }
.head { height: 45px; padding-top: 8px; border-bottom: 1px solid #c6c6cd; color: #424650; letter-spacing: -.15px; }
.row { height: 36px; }
.c0 { height: 21px; padding-left: 15px; display: flex; align-items: center; }
.head .c0 { border-right: 2px solid #c6c6cd; }
.cb { width: 19px; height: 19px; border: 1px solid #7d7d86; border-radius: 4px; background: #fff; }
.cell { height: 21px; padding: 0 16px 0 20px; display: flex; align-items: center; justify-content: space-between; }
.wide { padding-right: 10px; letter-spacing: .08px; }
.head .cell + .cell { border-left: 1px solid #8c8c94; padding-left: 19px; }
.head .on { color: #0f141a; letter-spacing: -.5px; }
.cell a { color: #006ce0; border-bottom: 1px solid #006ce0; }
.date { letter-spacing: .55px; }

/* console footer */
.foot { flex: none; height: 41px; background: #161d26; border-top: 1px solid #424650; display: flex; align-items: center; padding: 0 19px; font-size: 14px; color: #f0f0f3; }
.f1 { margin-left: 6px; width: 100px; }
.copy { margin-left: auto; margin-right: 36px; color: #c6c6cd; }
.f4 { margin: 0 30px; }
.f5 { letter-spacing: -.15px; }

/* taskbar */
.taskbar { flex: none; height: 72px; border-top: 2px solid #b1b5a8; padding-bottom: 1px; background: linear-gradient(90deg, #c9efe8 0, #cce6e4 180px, #caedda 400px, #cceddb 580px, #e0dcd0 760px, #e4e2c8 900px, #ece8bf 1050px, #efe5bd 1350px, #f0dfcb 1530px, #e6e6cc 1640px, #d6e9d8 1800px, #d5eadf 1920px); display: flex; align-items: center; font-family: "Open Sans", "Noto Sans", sans-serif; font-size: 18px; line-height: 24px; color: #1a1a1a; }
.weather { display: flex; align-items: center; width: 500px; padding-left: 28px; }
.wicon { position: relative; height: 24px; margin-top: -6px; }
.wicon b { position: absolute; left: 17px; top: -13px; width: 24px; height: 24px; border-radius: 50%; background: #c42b1c; color: #fff; font-size: 16px; font-weight: 400; text-align: center; }
.wtext { margin: -3px 0 0 10px; display: flex; flex-direction: column; letter-spacing: -.2px; }
.dim { color: #5b6864; }
.tsearch { margin-left: 22px; width: 326px; height: 47px; border-radius: 24px; border: 1px solid #bccabf; border-bottom: 2px solid #b4b8ae; background: linear-gradient(90deg, #f1faf6, #f8f5f2 50%, #f6f5f0); display: flex; align-items: center; padding-left: 15px; font-size: 20px; color: #5c5c5c; }
.tsearch span { margin-left: 16px; letter-spacing: -.35px; }
.emo { margin-left: auto; margin-right: 5px; }
.tv { margin-left: 20px; }
.app { width: 36px; height: 36px; margin-left: 30px; }
.runbox { position: relative; width: 56px; height: 56px; margin-left: 20px; border-radius: 6px; background: #f8f3e0; box-shadow: 0 1px 1px #d6cfae; display: flex; align-items: center; justify-content: center; }
.runbox i { position: absolute; left: 16px; bottom: -1px; width: 24px; height: 5px; border-radius: 3px; background: #0078d4; }
.code { position: relative; margin-left: 20px; }
.code i { position: absolute; left: 14px; top: 42px; width: 9px; height: 5px; border-radius: 3px; background: #86826e; }
.tray { flex: 1; display: flex; align-items: center; padding-right: 29px; margin-left: 118px; }
.cl { margin-left: 28px; }
.lang { margin-left: 25px; width: 38px; display: flex; flex-direction: column; align-items: center; letter-spacing: -.4px; }
.wf { margin-left: 26px; }
.vo { margin-left: 12px; }
.ba { margin-left: 12px; }
.clock { margin: -2px 0 0 auto; display: flex; flex-direction: column; align-items: flex-end; }
.time { letter-spacing: -.4px; }
```
